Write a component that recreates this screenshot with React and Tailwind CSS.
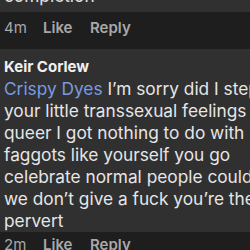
export default function App() {
    const font = { fontFamily: 'Inter, "Liberation Sans", sans-serif' };
    return (
        <div className="w-[250px] h-[250px] overflow-hidden bg-[#1e1e1f]" style={font}>
            {/* previous comment (cut off) */}
            <div className="w-[280px] h-[12px] bg-[#303031] rounded-br-2xl overflow-hidden">
                <div className="pl-1 text-[17.3px] leading-[22px] text-[#e3e3e3] -mt-[15px]">completion</div>
            </div>
            <div className="flex items-center h-[28px] mt-[2px] pl-1 text-[15px] text-[#a8a8aa]">
                <span className="w-[39px]">4m</span>
                <span className="w-[47px] font-semibold">Like</span>
                <span className="font-semibold">Reply</span>
            </div>

            {/* comment */}
            <div className="mt-[7px] w-[290px] h-[183px] bg-[#303031] pl-1 pt-[7px]">
                <div className="text-[15px] font-bold text-[#f0f0f0] leading-[22px]">Keir Corlew</div>
                <div className="text-[17.3px] leading-[22px] text-[#e6e6e6] whitespace-nowrap">
                    <span className="text-[#7b9ae0]">Crispy Dyes</span> I’m sorry did I step on
                    <br />your little transsexual feelings lol
                    <br />queer I got nothing to do with
                    <br />faggots like yourself you go
                    <br />celebrate normal people could
                    <br />we don’t give a fuck you’re the
                    <br />pervert
                </div>
            </div>
            <div className="flex items-center h-[26px] pl-1 text-[15px] text-[#a8a8aa]">
                <span className="w-[39px]">2m</span>
                <span className="w-[47px] font-semibold">Like</span>
                <span className="font-semibold">Reply</span>
            </div>
        </div>
    );
}
